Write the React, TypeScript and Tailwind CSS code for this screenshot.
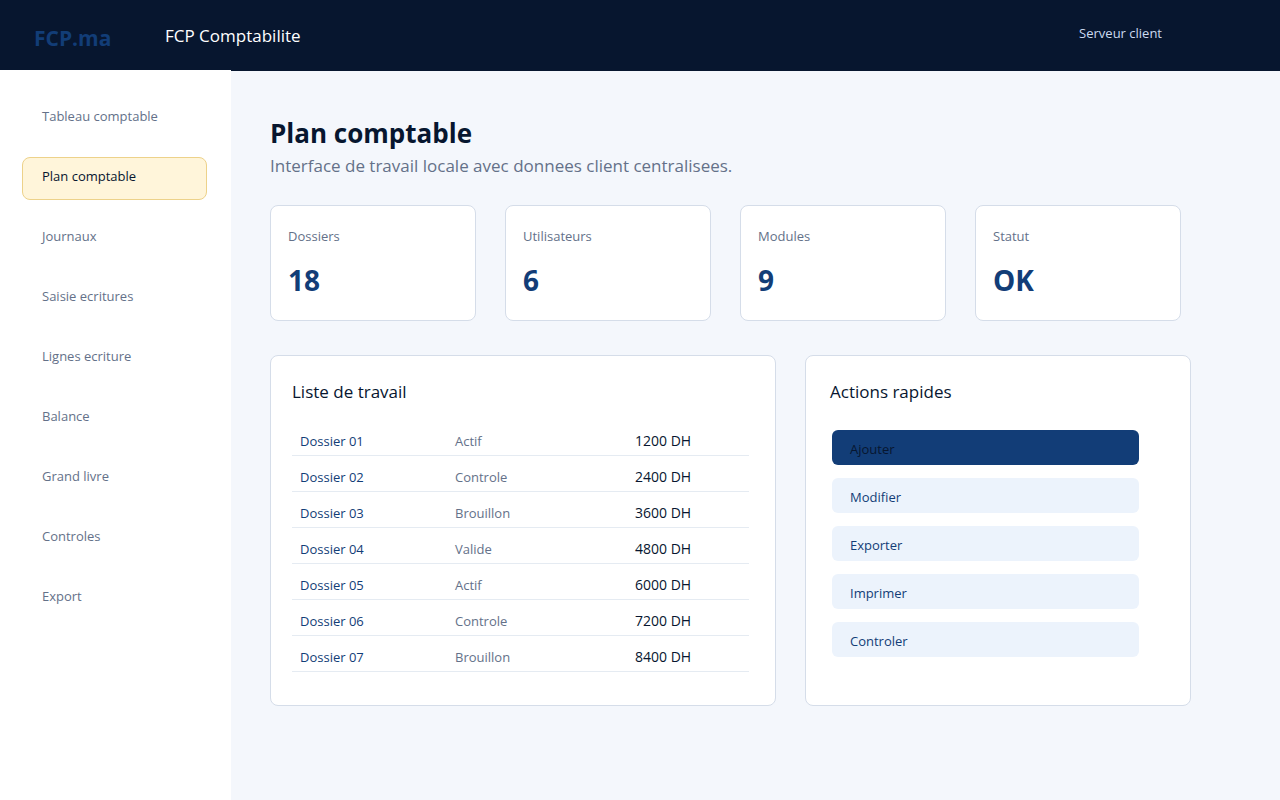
import React, { useState } from 'react';

interface Dossier {
  name: string;
  status: string;
  amount: string;
}

const navItems = [
  'Tableau comptable',
  'Plan comptable',
  'Journaux',
  'Saisie ecritures',
  'Lignes ecriture',
  'Balance',
  'Grand livre',
  'Controles',
  'Export',
];

const stats = [
  { label: 'Dossiers', value: '18' },
  { label: 'Utilisateurs', value: '6' },
  { label: 'Modules', value: '9' },
  { label: 'Statut', value: 'OK' },
];

const dossiers: Dossier[] = [
  { name: 'Dossier 01', status: 'Actif', amount: '1200 DH' },
  { name: 'Dossier 02', status: 'Controle', amount: '2400 DH' },
  { name: 'Dossier 03', status: 'Brouillon', amount: '3600 DH' },
  { name: 'Dossier 04', status: 'Valide', amount: '4800 DH' },
  { name: 'Dossier 05', status: 'Actif', amount: '6000 DH' },
  { name: 'Dossier 06', status: 'Controle', amount: '7200 DH' },
  { name: 'Dossier 07', status: 'Brouillon', amount: '8400 DH' },
];

const actions = ['Ajouter', 'Modifier', 'Exporter', 'Imprimer', 'Controler'];

const Header = () => (
  <header className="flex h-[70px] items-start bg-[#07162f] pt-6 pl-[34px] pr-[118px]">
    <div className="w-[131px] text-[21px] leading-7 font-bold text-[#123d77]">FCP.ma</div>
    <div className="text-[17px] leading-6 text-white">FCP Comptabilite</div>
    <div className="ml-auto text-[13px] leading-[18px] text-[#cbdaf0]">Serveur client</div>
  </header>
);

const Sidebar = ({ active, onSelect }: { active: string; onSelect: (item: string) => void }) => (
  <aside className="w-[231px] shrink-0 bg-white pt-[27px] pl-[22px] pr-6">
    <nav className="flex flex-col gap-[17px]">
      {navItems.map((item) => (
        <a
          key={item}
          href="#"
          onClick={(e) => {
            e.preventDefault();
            onSelect(item);
          }}
          className={`block rounded-lg border pt-2 pb-[13px] pl-[19px] text-[13px] leading-5 ${
            item === active
              ? 'border-[#edd28a] bg-[#fff5da] text-[#07162f]'
              : 'border-transparent text-[#647189]'
          }`}
        >
          {item}
        </a>
      ))}
    </nav>
  </aside>
);

const WorkList = () => (
  <section className="rounded-lg border border-[#d5dde9] bg-white pt-6 pr-[26px] pb-[33px] pl-[21px]">
    <h2 className="mb-4 text-[17px] leading-6">Liste de travail</h2>
    <table className="w-full table-fixed border-separate border-spacing-0 text-left text-[13px] leading-5">
      <colgroup>
        <col className="w-[155px]" />
        <col className="w-[180px]" />
        <col />
      </colgroup>
      <tbody>
        {dossiers.map((d) => (
          <tr key={d.name}>
            <td className="border-b border-[#e5ebf2] px-2 pt-[11px] pb-1 text-[#123d77]">{d.name}</td>
            <td className="border-b border-[#e5ebf2] px-2 pt-[11px] pb-1 text-[#647189]">{d.status}</td>
            <td className="border-b border-[#e5ebf2] px-2 pt-[11px] pb-1 text-sm leading-5">{d.amount}</td>
          </tr>
        ))}
      </tbody>
    </table>
  </section>
);

const QuickActions = () => (
  <section className="rounded-lg border border-[#d5dde9] bg-white pt-6 pr-[51px] pl-6">
    <h2 className="mb-[26px] text-[17px] leading-6">Actions rapides</h2>
    <div className="flex flex-col gap-[13px] pl-0.5">
      {actions.map((action, index) => (
        <button
          key={action}
          type="button"
          className={`rounded-md pt-[9px] pb-1.5 pl-[18px] text-left text-[13px] leading-5 ${
            index === 0 ? 'bg-[#123d77] text-[#07162f]' : 'bg-[#ecf3fc] text-[#123d77]'
          }`}
        >
          {action}
        </button>
      ))}
    </div>
  </section>
);

const App = () => {
  const [active, setActive] = useState('Plan comptable');

  return (
    <div className="flex min-h-screen flex-col bg-[#f4f7fc] font-['Segoe_UI','Open_Sans','Noto_Sans',sans-serif] text-[#07162f]">
      <Header />
      <div className="flex flex-1">
        <Sidebar active={active} onSelect={setActive} />
        <main className="min-w-0 flex-1 border-t border-[#07162f] pt-11 pr-[89px] pb-10 pl-[39px]">
          <h1 className="text-[26px] leading-9 font-bold">{active}</h1>
          <p className="mt-[3px] text-[17px] leading-6 text-[#647189]">
            Interface de travail locale avec donnees client centralisees.
          </p>

          <div className="mt-[27px] mr-2.5 grid grid-cols-4 gap-[29px]">
            {stats.map((stat) => (
              <div key={stat.label} className="rounded-lg border border-[#d5dde9] bg-white pt-5 pb-[22px] pl-[17px]">
                <div className="text-[13px] leading-5 text-[#647189]">{stat.label}</div>
                <div className="mt-4 text-[28px] leading-9 font-bold text-[#123d77]">{stat.value}</div>
              </div>
            ))}
          </div>

          <div className="mt-[34px] grid grid-cols-[506fr_386fr] gap-[29px]">
            <WorkList />
            <QuickActions />
          </div>
        </main>
      </div>
    </div>
  );
};

export default App;
